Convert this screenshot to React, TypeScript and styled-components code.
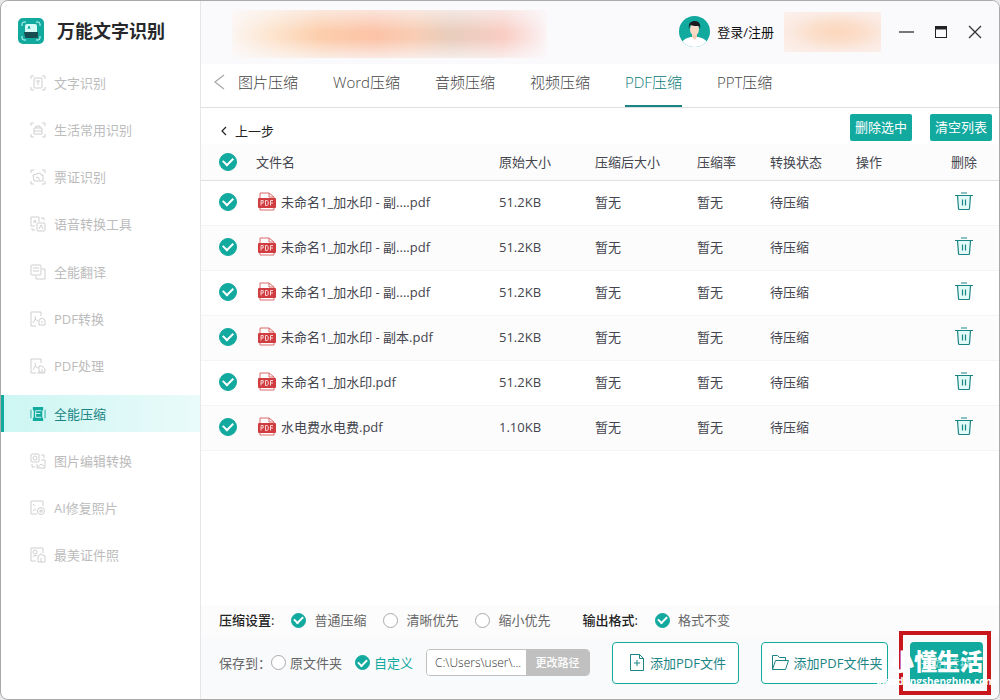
import React from "react";
import styled, { createGlobalStyle, css } from "styled-components";

const teal = "#12a99f";
const tealDark = "#1b8585";

const GlobalStyle = createGlobalStyle`
  * { box-sizing: border-box; }
  html, body, #root { height: 100%; }
  body {
    margin: 0;
    background: #e9e9ec;
    font-family: "Open Sans", "Noto Sans CJK SC", sans-serif;
    font-size: 13px;
    font-weight: 400;
    line-height: 20px;
    color: #333;
  }
  button, input { font: inherit; color: inherit; }
  button { cursor: pointer; padding: 0; border: 0; background: none; white-space: nowrap; }
  h1, ul, p { margin: 0; padding: 0; }
  svg { display: block; flex: none; }
`;

const Window = styled.div`
  display: grid;
  grid-template-columns: 200px minmax(0, 1fr);
  min-height: 100%;
  border: 1px solid #aaa;
  border-radius: 8px;
  background: #fff;
  overflow: hidden;
`;

const Sidebar = styled.aside`
  border-right: 1px solid #e6e6e8;
`;

const Brand = styled.header`
  display: flex;
  align-items: center;
  gap: 13px;
  height: 58px;
  padding: 2px 0 0 17px;
`;

const BrandName = styled.h1`
  font-size: 18px;
  line-height: 28px;
  font-weight: 700;
  color: #26282b;
`;

const Menu = styled.ul`
  display: grid;
  grid-auto-rows: 1fr;
  align-items: center;
  height: 520px;
  list-style: none;
`;

const MenuLink = styled.a<{ $active?: boolean }>`
  display: flex;
  align-items: center;
  gap: 8px;
  height: 37px;
  padding-left: ${(p) => (p.$active ? 26 : 29)}px;
  border-left: ${(p) => (p.$active ? `3px solid ${teal}` : "0")};
  background: ${(p) => (p.$active ? "linear-gradient(90deg, #cdf6f3, #eafbfa)" : "none")};
  color: ${(p) => (p.$active ? tealDark : "#bcbcbc")};
  text-decoration: none;
`;

const Main = styled.main`
  display: flex;
  flex-direction: column;
  min-width: 0;
`;

const TopBar = styled.div`
  display: flex;
  align-items: center;
  height: 63px;
  padding: 0 16px 2px 31px;
  background: #fafafd;
`;

const Banner = styled.div`
  flex: 0 1 315px;
  height: 48px;
  margin: 4px auto 0 0;
  background:
    linear-gradient(180deg, rgba(250, 250, 253, 0.6), rgba(250, 250, 253, 0) 45%, rgba(250, 250, 253, 0) 60%, rgba(250, 250, 253, 0.7)),
    linear-gradient(90deg, #fcf5f1, #fde3cc 14%, #fcceac 28%, #fcc3a8 45%, #f8cdb4 58%, #e8cdbd 70%, #f9cdc3 86%, #fbeaea 97%, #fbf5f6);
`;

const Badge = styled.div`
  width: 97px;
  height: 40px;
  margin: 0 18px 0 10px;
  background: radial-gradient(ellipse at 55% 50%, #fcd6bc, #fbdfcc 35%, #fbeae2 65%, #fbf1ec 100%);
`;

const Login = styled.button`
  display: flex;
  align-items: center;
  gap: 7px;
  color: #111;
`;

const WindowButtons = styled.div`
  display: flex;
  align-items: center;
  gap: 18px;
`;

const Tabs = styled.nav`
  display: flex;
  align-items: stretch;
  gap: 35px;
  height: 44px;
  padding-left: 12px;
  border-bottom: 1px solid #dfe0e2;
`;

const TabsPrev = styled.button`
  margin-right: -22px;
  padding-bottom: 8px;
`;

const Tab = styled.a<{ $active?: boolean }>`
  padding-top: 7px;
  font-size: 15px;
  font-weight: 300;
  line-height: 22px;
  white-space: nowrap;
  text-decoration: none;
  color: ${(p) => (p.$active ? "#087a78" : "#444")};
  border-bottom: 2px solid ${(p) => (p.$active ? tealDark : "transparent")};
`;

const Actions = styled.div`
  display: flex;
  align-items: center;
  height: 36px;
  padding: 2px 7px 0 18px;
`;

const Back = styled.button`
  display: flex;
  align-items: center;
  gap: 7px;
  margin-right: auto;
  padding-top: 8px;
  color: #222;
`;

const SolidButton = styled.button`
  width: 62px;
  height: 27px;
  margin-left: 18px;
  border-radius: 2px;
  background: ${teal};
  color: #fff;
`;

const Table = styled.table`
  width: 100%;
  table-layout: fixed;
  border-collapse: collapse;
  text-align: left;
  white-space: nowrap;
  color: #44454e;

  th, td { padding: 0; font-weight: inherit; }
  td { padding-bottom: 2px; }
  thead tr { height: 36px; background: #fcfcfc; border-bottom: 1px solid #dfe0e2; }
  tbody tr { height: 45px; border-bottom: 1px solid #f4f4f6; }
  tbody tr:nth-child(even) { background: #fcfcfd; }
  th:first-child, td:first-child { padding-left: 18px; }
`;

const Col = styled.col<{ $w?: number }>`
  width: ${(p) => (p.$w ? `${p.$w}px` : "auto")};
`;

const FileName = styled.div`
  display: flex;
  align-items: center;
  gap: 4px;
  padding-left: 1px;
`;

const DeleteButton = styled.button`
  display: block;
  margin-left: 3px;
`;

const mark = css<{ $size: number }>`
  display: grid;
  place-items: center;
  flex: none;
  appearance: none;
  width: ${(p) => p.$size}px;
  height: ${(p) => p.$size}px;
  margin: 0;
  border: 1px solid #a9a9ad;
  border-radius: 50%;
  background: #fff;

  &:checked { border-color: ${teal}; background: ${teal}; }
  &:checked::after {
    content: "";
    width: ${(p) => (p.$size > 16 ? 8 : 7)}px;
    height: ${(p) => (p.$size > 16 ? 5 : 4)}px;
    margin-bottom: 2px;
    border: solid #fff;
    border-width: 0 0 2px 2px;
    transform: rotate(-45deg);
  }
`;

const Check = styled.input<{ $size: number }>`${mark}`;

const Footer = styled.footer`
  margin-top: auto;
`;

const Settings = styled.div`
  display: flex;
  align-items: center;
  gap: 17px;
  height: 32px;
  padding: 0 0 2px 18px;
  background: #fcfcfc;
  white-space: nowrap;
`;

const SettingName = styled.span<{ $spaced?: boolean }>`
  margin-left: ${(p) => (p.$spaced ? 15 : 0)}px;
  font-weight: 500;
  color: #222;
`;

const Option = styled.label<{ $tight?: boolean; $active?: boolean }>`
  display: flex;
  align-items: center;
  gap: ${(p) => (p.$tight ? 4 : 8)}px;
  margin-right: ${(p) => (p.$tight ? 13 : 0)}px;
  color: ${(p) => (p.$active ? teal : "#666")};
  white-space: nowrap;
`;

const SaveBar = styled.div`
  display: flex;
  align-items: center;
  height: 62px;
  padding: 0 16px 11px 18px;
  background: #f9fafc;
  color: #666;
  white-space: nowrap;
`;

const PathBox = styled.div`
  display: flex;
  width: 164px;
  height: 27px;
  border: 1px solid #c0c0c0;
  border-radius: 4px;
  overflow: hidden;
`;

const PathInput = styled.input`
  flex: 1;
  min-width: 0;
  padding: 0 0 0 8px;
  border: 0;
  background: #fff;
  font-size: 12px;
  font-weight: 300;
  color: #333;
`;

const PathButton = styled.button`
  width: 63px;
  background: #c0c0c0;
  color: #fff;
  font-size: 11px;
  font-weight: 500;
`;

const FooterButtons = styled.div`
  display: flex;
  gap: 22px;
  margin-left: auto;
`;

const OutlineButton = styled.button`
  display: flex;
  align-items: center;
  justify-content: center;
  gap: 5px;
  width: 127px;
  height: 42px;
  padding-left: 4px;
  border: 1px solid ${teal};
  border-radius: 4px;
  background: #fff;
  color: ${tealDark};
`;

const StartWrap = styled.div`
  position: relative;
`;

const StartButton = styled.button`
  width: 73px;
  height: 42px;
  border-radius: 4px;
  background: ${teal};
  color: #9fe0db;
`;

const Highlight = styled.span`
  position: absolute;
  inset: -11px -8px -11px -11px;
  border: 4px solid #c8161d;
  pointer-events: none;
`;

const Watermark = styled.p`
  position: absolute;
  right: -12px;
  top: 6px;
  text-align: right;
  color: #fff;
  font-weight: 900;
  font-size: 23px;
  line-height: 26px;
  pointer-events: none;

  span { display: block; padding-right: 12px; }
  small { display: block; font-size: 10px; line-height: 14px; font-weight: 700; }
`;

const cornerPath = "M1 4V1h3M12 1h3v3M15 12v3h-3M4 15H1v-3";

const menuArt: Record<string, React.ReactNode> = {
  text: <><path d={cornerPath} /><rect x="4" y="3" width="8" height="10" rx="1" /><path d="M6 6h4M8 6v4" /></>,
  life: <><path d={cornerPath} /><path d="M4 6h8v6H4zM6 6V4h4v2M4 9h8" /></>,
  ticket: <><path d={cornerPath} /><path d="M3 6l7-2 1 2h2v6H4zM6 9l2-1 2 3" /></>,
  voice: <><path d="M9 6V1H1v9h4M3 6h1l1-2 1 3M11 2h3v2M2 12v2h3" /><rect x="7" y="7" width="8" height="8" rx="1" /><path d="M9 13l2-4 2 4" /></>,
  translate: <><rect x="1" y="1" width="10" height="10" rx="1" /><path d="M3 4h6M3 7h6M12 5h3v10H6v-3" /></>,
  convert: <><path d="M6 15H1V1h10v4M3 12c2-3 3-5 2-7M5 8l3 2" /><path d="M9 9l3-2 3 2v5H9zM11 11h2" /></>,
  process: <><path d="M6 15H1V1h10v4M3 12c2-3 3-5 2-7M5 8l3 2" /><path d="M9 14V8h3l3 3v3zM11 12h2M7 15h8" /></>,
  edit: <><rect x="1" y="1" width="8" height="8" rx="1" /><circle cx="5" cy="5" r="2" /><path d="M11 2h3v3M2 11v3h3M7 11v4h8V7h-4M8 14l3-3 3 2" /></>,
  repair: <><path d="M7 14H1V1h12v5M3 4l2 2M3 11l3-2" /><circle cx="11" cy="11" r="3.500" /><path d="M9 11h4M11 9v4" /></>,
  idphoto: <><path d="M6 14H1V1h12v5" /><circle cx="5" cy="5" r="2" /><path d="M3 10c1-2 3-2 4-1M8 15V9l3-2 4 2v6zM11 11v4" /></>,
};

const MenuIcon = ({ name }: { name: string }) =>
  name === "compress" ? (
    <svg width="16" height="16" viewBox="0 0 17 17" fill="none">
      <path d="M3 1h11v3l-1 1v7l1 1v3H3v-3l1-1V5L3 4z" fill={teal} />
      <path d="M1 4v9M16 4v9" stroke={teal} />
      <path d="M6 5h6M6 8h5M6 12h6M6 5v7" stroke="#d8f7f4" />
    </svg>
  ) : (
    <svg width="16" height="16" viewBox="0 0 16 16" fill="none" stroke="#c9c9c9" strokeWidth="0.9">
      {menuArt[name]}
    </svg>
  );

const Logo = () => (
  <svg width="26" height="26" viewBox="0 0 26 26" fill="none">
    <rect width="26" height="26" rx="5" fill={teal} />
    <path d="M4 8V6q0-2 2-2h2M18 4h2q2 0 2 2v2M22 18v2q0 2-2 2h-2M8 22H6q-2 0-2-2v-2" stroke="#c9fff8" />
    <path d="M7 14V8q0-2 2-2h8q2 0 2 2v6z" fill="#d5fbf6" />
    <path d="M10 11l1-3 1 3" stroke={teal} />
    <path d="M6 14h14v5q0 1-1 1H8q-1 0-1-1z" fill="#174d50" />
  </svg>
);

const Avatar = () => (
  <svg width="31" height="31" viewBox="0 0 31 31">
    <clipPath id="avatar"><circle cx="15.500" cy="15.500" r="15.500" /></clipPath>
    <g clipPath="url(#avatar)">
      <rect width="31" height="31" fill={teal} />
      <path d="M2 31c0-7 5-9 10-10h7c5 1 10 3 10 10z" fill="#fff" />
      <path d="M13 17h5v4l-2 3-3-3z" fill="#f2cdb4" />
      <ellipse cx="15.500" cy="13.500" rx="4.500" ry="6" fill="#f8dac5" />
      <path d="M10 13c-1-6 2-8 6-8 4 0 6 3 5 8l-1-3c-3 0-6 0-9-1z" fill="#1d1b22" />
    </g>
  </svg>
);

const PdfIcon = () => (
  <svg width="20" height="19" viewBox="0 0 20 19" fill="none">
    <path d="M3 6V1h9l5 4v13H3v-4M12 1v4h5" stroke="#db6a6a" />
    <rect x="1" y="6" width="18" height="10" rx="1" fill="#d03c3f" />
    <path d="M4 13.500V8.500h2.200v2.500H4M8.500 8.500h1.500l1.200 1v3l-1.200 1H8.500zM13.500 13.500v-5H16M13.500 11H16" stroke="#fbe3e3" strokeWidth="0.900" />
  </svg>
);

const TrashIcon = () => (
  <svg width="20" height="20" viewBox="0 0 20 20" fill="none" stroke={tealDark} strokeWidth="1.200">
    <path d="M3.500 3.500l1 13q0 1 1 1h9q1 0 1-1l1-13z" fill="#e2fbf8" />
    <path d="M1 3.500h18M7 1h6M8.500 7.500v6M11.500 7.500v6" />
  </svg>
);

const menu = [
  ["text", "文字识别"],
  ["life", "生活常用识别"],
  ["ticket", "票证识别"],
  ["voice", "语音转换工具"],
  ["translate", "全能翻译"],
  ["convert", "PDF转换"],
  ["process", "PDF处理"],
  ["compress", "全能压缩"],
  ["edit", "图片编辑转换"],
  ["repair", "AI修复照片"],
  ["idphoto", "最美证件照"],
];

const tabs = ["图片压缩", "Word压缩", "音频压缩", "视频压缩", "PDF压缩", "PPT压缩"];

const files = [
  ["未命名1_加水印 - 副....pdf", "51.2KB"],
  ["未命名1_加水印 - 副....pdf", "51.2KB"],
  ["未命名1_加水印 - 副....pdf", "51.2KB"],
  ["未命名1_加水印 - 副本.pdf", "51.2KB"],
  ["未命名1_加水印.pdf", "51.2KB"],
  ["水电费水电费.pdf", "1.10KB"],
];

export default function App() {
  return (
    <>
      <GlobalStyle />
      <Window>
        <Sidebar>
          <Brand>
            <Logo />
            <BrandName>万能文字识别</BrandName>
          </Brand>
          <Menu>
            {menu.map(([icon, label]) => (
              <li key={label}>
                <MenuLink href="#" $active={icon === "compress"}>
                  <MenuIcon name={icon} />
                  {label}
                </MenuLink>
              </li>
            ))}
          </Menu>
        </Sidebar>
        <Main>
          <TopBar>
            <Banner />
            <Login><Avatar />登录/注册</Login>
            <Badge />
            <WindowButtons>
              <button aria-label="最小化">
                <svg width="16" height="16" viewBox="0 0 16 16"><path d="M0 8h15" stroke="#777" strokeWidth="2" /></svg>
              </button>
              <button aria-label="最大化">
                <svg width="16" height="16" viewBox="0 0 16 16" fill="none">
                  <rect x="2.500" y="2.500" width="11" height="11" stroke="#222" />
                  <path d="M2 4h12" stroke="#222" strokeWidth="3" />
                </svg>
              </button>
              <button aria-label="关闭">
                <svg width="16" height="16" viewBox="0 0 16 16"><path d="M2 2l12 12M14 2L2 14" stroke="#333" strokeWidth="1.300" /></svg>
              </button>
            </WindowButtons>
          </TopBar>
          <Tabs>
            <TabsPrev aria-label="向前">
              <svg width="12" height="16" viewBox="0 0 12 16" fill="none"><path d="M11 1L2 8l9 7" stroke="#aaa" strokeWidth="1.300" /></svg>
            </TabsPrev>
            {tabs.map((t) => (
              <Tab key={t} href="#" $active={t === "PDF压缩"}>{t}</Tab>
            ))}
          </Tabs>
          <Actions>
            <Back>
              <svg width="9" height="10" viewBox="0 0 9 10" fill="none"><path d="M7 1L3 5l4 4" stroke="#222" strokeWidth="1.200" /></svg>
              上一步
            </Back>
            <SolidButton>删除选中</SolidButton>
            <SolidButton>清空列表</SolidButton>
          </Actions>
          <Table>
            <colgroup>
              <Col $w={55} /><Col /><Col $w={96} /><Col $w={102} /><Col $w={73} /><Col $w={86} /><Col $w={95} /><Col $w={48} />
            </colgroup>
            <thead>
              <tr>
                <th><Check type="checkbox" $size={18} defaultChecked aria-label="全选" /></th>
                <th>文件名</th>
                <th>原始大小</th>
                <th>压缩后大小</th>
                <th>压缩率</th>
                <th>转换状态</th>
                <th>操作</th>
                <th>删除</th>
              </tr>
            </thead>
            <tbody>
              {files.map(([name, size], i) => (
                <tr key={i}>
                  <td><Check type="checkbox" $size={18} defaultChecked aria-label={name} /></td>
                  <td><FileName><PdfIcon />{name}</FileName></td>
                  <td>{size}</td>
                  <td>暂无</td>
                  <td>暂无</td>
                  <td>待压缩</td>
                  <td />
                  <td><DeleteButton aria-label="删除"><TrashIcon /></DeleteButton></td>
                </tr>
              ))}
            </tbody>
          </Table>
          <Footer>
            <Settings>
              <SettingName>压缩设置:</SettingName>
              <Option><Check type="radio" name="level" $size={15} defaultChecked />普通压缩</Option>
              <Option><Check type="radio" name="level" $size={15} />清晰优先</Option>
              <Option><Check type="radio" name="level" $size={15} />缩小优先</Option>
              <SettingName $spaced>输出格式:</SettingName>
              <Option><Check type="radio" name="format" $size={15} defaultChecked />格式不变</Option>
            </Settings>
            <SaveBar>
              <span>保存到：</span>
              <Option $tight><Check type="radio" name="target" $size={15} />原文件夹</Option>
              <Option $tight $active><Check type="radio" name="target" $size={15} defaultChecked />自定义</Option>
              <PathBox>
                <PathInput aria-label="保存路径" readOnly value="C:\Users\user\..." />
                <PathButton>更改路径</PathButton>
              </PathBox>
              <FooterButtons>
                <OutlineButton>
                  <svg width="16" height="19" viewBox="0 0 16 19" fill="none" stroke={tealDark}>
                    <path d="M1.500 1.500h9l4 4v12h-13zM10.500 1.500v4h4M8 7v6M5 10h6" />
                  </svg>
                  添加PDF文件
                </OutlineButton>
                <OutlineButton>
                  <svg width="18" height="17" viewBox="0 0 18 17" fill="none" stroke={tealDark}>
                    <path d="M1.500 15.500v-14h5l2 2h6v3M1.500 15.500l3-9h13l-3 9z" />
                  </svg>
                  添加PDF文件夹
                </OutlineButton>
                <StartWrap>
                  <StartButton>开始转换</StartButton>
                  <Highlight />
                  <Watermark><span>小懂生活</span><small>xiaodongshenghuo.com</small></Watermark>
                </StartWrap>
              </FooterButtons>
            </SaveBar>
          </Footer>
        </Main>
      </Window>
    </>
  );
}
